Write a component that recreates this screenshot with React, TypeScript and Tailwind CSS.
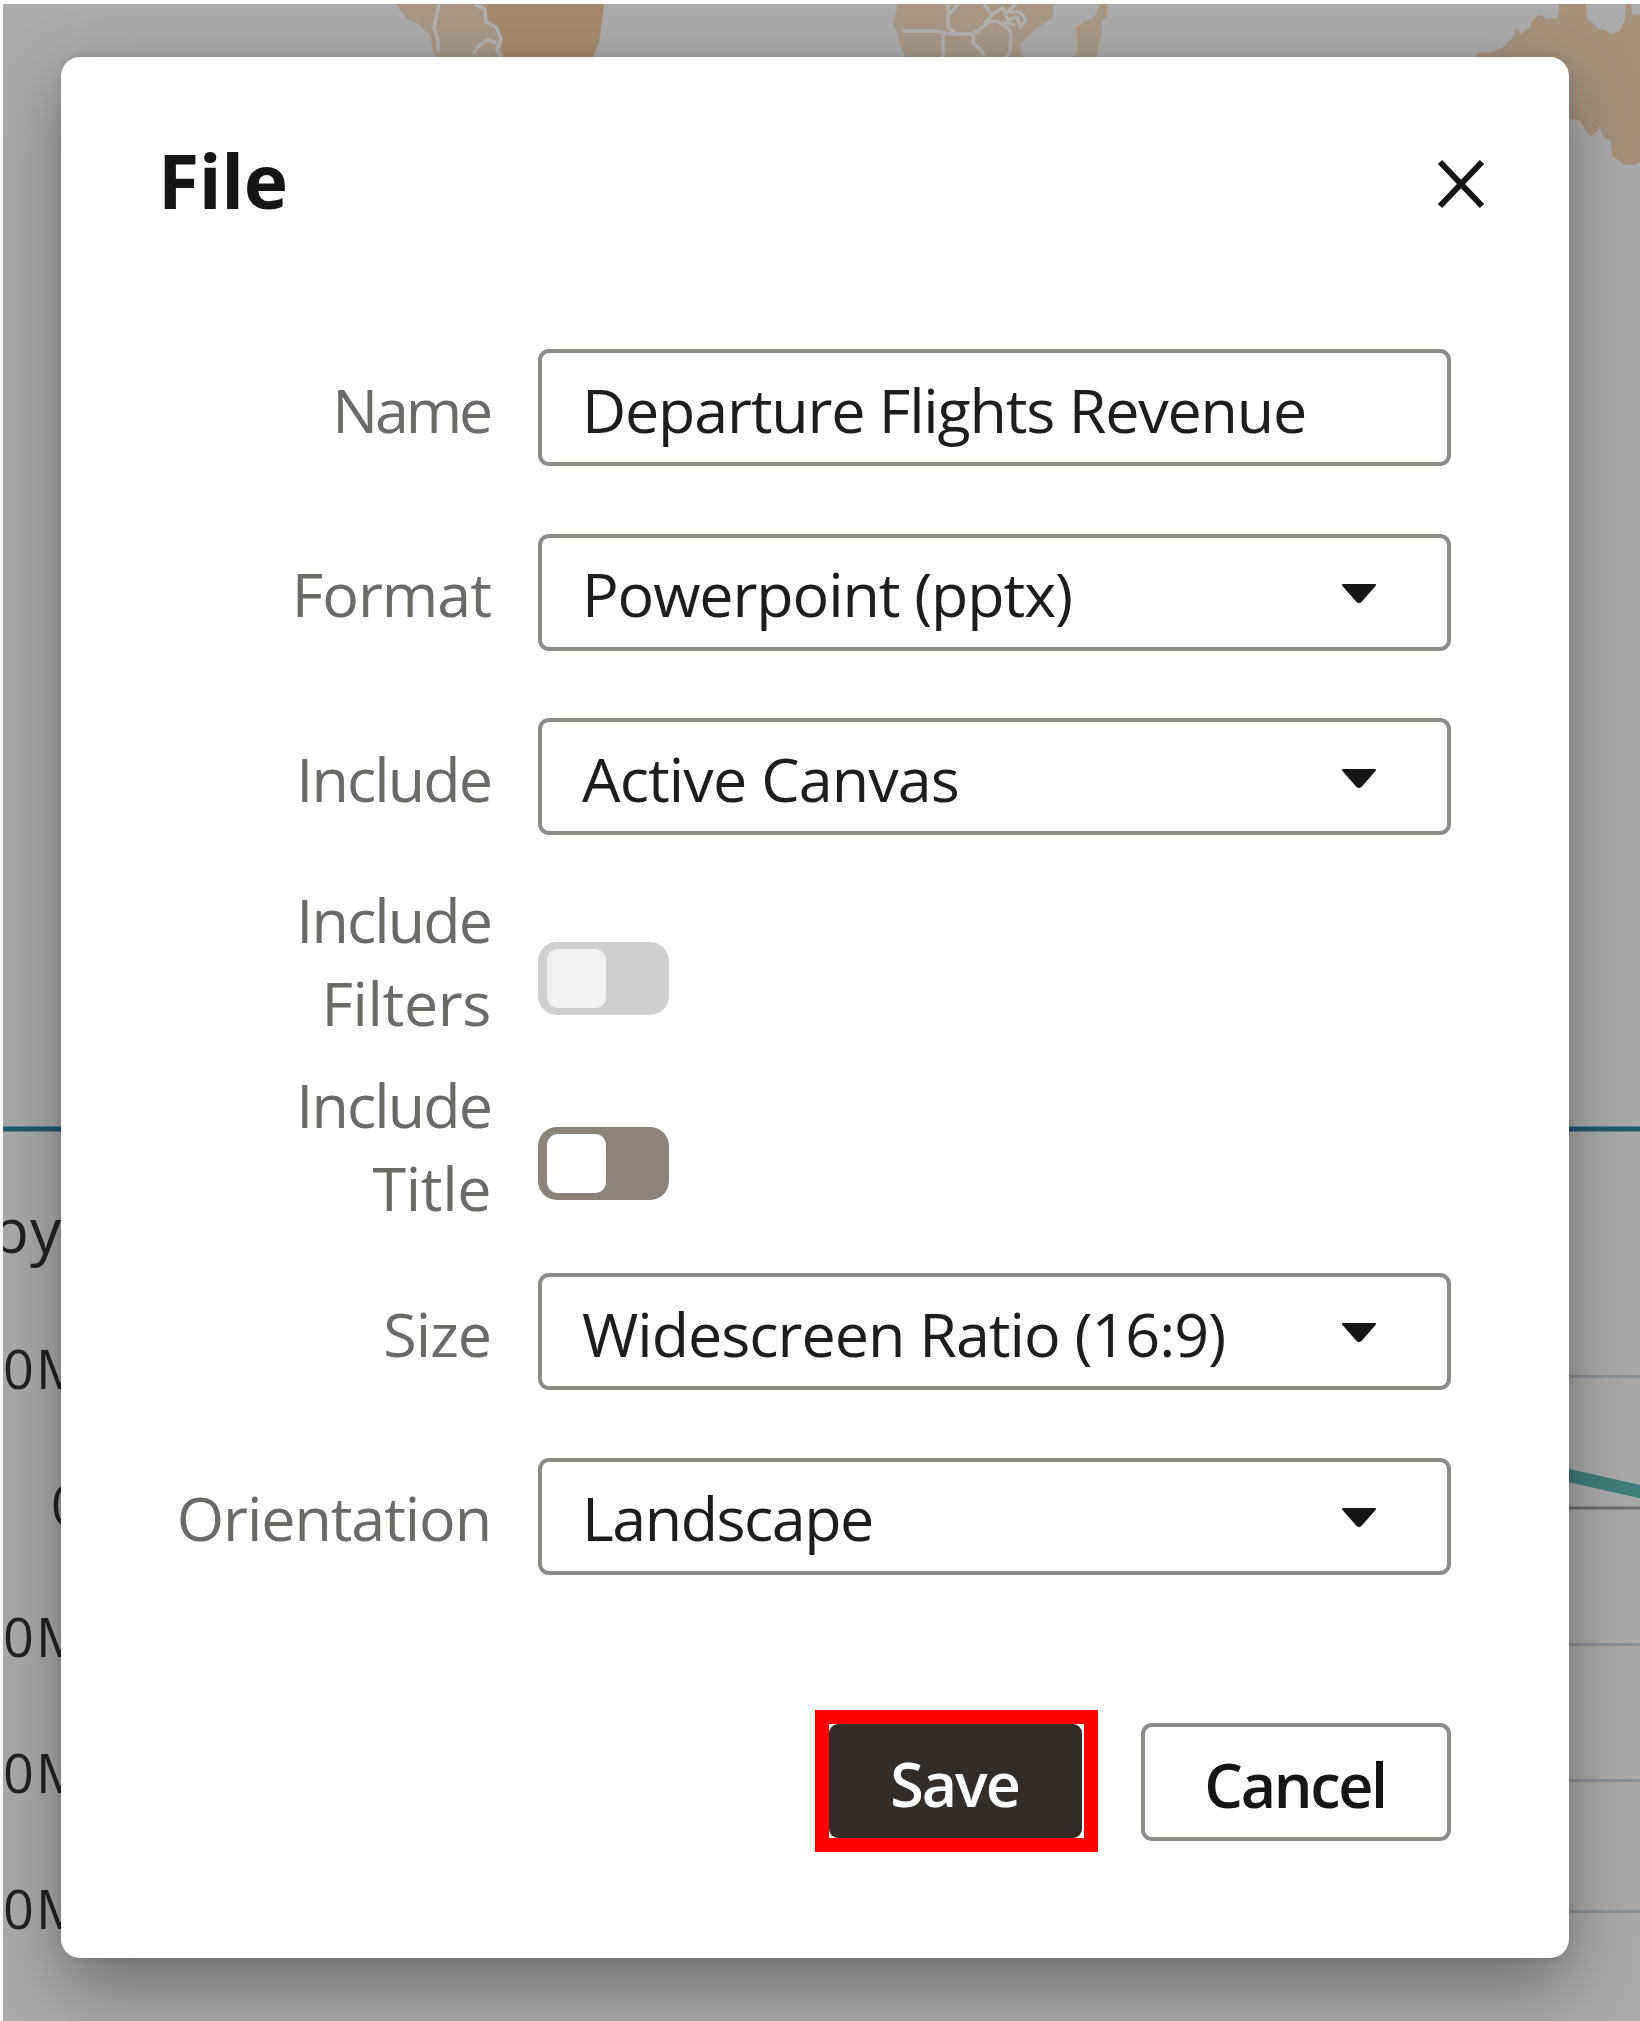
import type { ReactNode } from "react";

function MapAndChart() {
  return (
    <svg
      className="col-start-1 row-start-1 mt-1 ml-[3px]"
      width="1637"
      height="2017"
      viewBox="3 4 1637 2017"
      fontFamily='"Open Sans", sans-serif'
      fill="#242220"
    >
      <rect x="3" y="4" width="1637" height="2017" fill="#ababab" />

      {/* South America */}
      <path fill="#a99784" d="M396 4H490L500 24L502 38L508 60H440L433 52L430 35L418 24L407 19Z" />
      <path fill="#a58a6d" d="M486 4H604L602 22L599 42L592 60H504L502 44L496 26L487 18Z" />
      <path
        fill="none"
        stroke="#b0b1af"
        strokeWidth="3.5"
        strokeLinejoin="round"
        d="M439 4L436 18L434 28L438 40L438 52M475 5L485 9L486 22L496 27L501 39L497 50L501 58M497 43L488 40L478 46L474 54"
      />

      {/* Africa */}
      <path fill="#a99784" d="M898 4H1053V16L1044 24L1035 28L1028 37L1020 44L1021 54L1027 60H907L900 45L896 29L893 24Z" />
      <path
        fill="none"
        stroke="#b0b1af"
        strokeWidth="3.5"
        strokeLinejoin="round"
        d="M902 31H936L950 34H973L980 29L990 21L998 22L1008 28L1011 34L1010 52L1006 59M948 4V27L954 33M958 4L950 14M973 34V43L982 51L985 59M943 34V60M984 4L992 15L984 24M992 14L1003 8L1008 20L1017 17L1020 27L1026 20L1020 12H1008L1016 4M1003 22L1015 25"
      />
      <path fill="#a99784" d="M1101 4H1107V17L1102 21V34L1099 42L1096 60H1072L1078 50L1076 27L1083 22L1094 18L1097 10Z" />

      {/* Australia */}
      <path
        fill="#a7917b"
        d="M1476 60L1477 53L1493 52L1505 46L1514 36L1516 28L1521 34L1529 28L1532 21L1538 15L1543 16L1546 19L1558 18L1559 4H1586L1587 19L1592 23L1599 29L1605 30L1612 34L1620 31L1625 19L1626 4H1631L1632 15L1640 14V162L1635 165H1625L1612 156L1611 142L1601 134L1600 126L1595 134L1590 136L1583 126L1580 121L1568 118L1560 70Z"
      />

      {/* Chart: panel edge, gridlines and series */}
      <rect x="3" y="1126.500" width="1637" height="5" fill="#1f5a73" />
      <path stroke="#8d9094" strokeWidth="3" d="M1400 1376.5H1640M1400 1644.5H1640M1400 1780.5H1640M1400 1911.5H1640" />
      <path stroke="#6c6c6c" strokeWidth="3" d="M1400 1508H1640" />
      <path stroke="#3f7e79" strokeWidth="13" d="M1500 1460L1642 1492" />

      <text x="-9" y="1253" fontSize="62" letterSpacing="1">by</text>
      <g fontSize="54" letterSpacing="2">
        <text x="3" y="1389">0M</text>
        <text x="51" y="1525">0</text>
        <text x="3" y="1657">0M</text>
        <text x="3" y="1793">0M</text>
        <text x="3" y="1929">0M</text>
      </g>
    </svg>
  );
}

function Row({ label, children }: { label: ReactNode; children: ReactNode }) {
  return (
    <div className="flex h-[184.8px] items-center">
      <div className="flex w-[331px] shrink-0 flex-col items-end text-[#6b6a67]">{label}</div>
      <div className="ml-[47px] flex-1">{children}</div>
    </div>
  );
}

function Field({ text, spacing, dropdown }: { text: string; spacing: string; dropdown?: boolean }) {
  return (
    <div className="flex h-[117px] items-center justify-between rounded-[11px] border-[4px] border-[#8b8b88] pr-[70px] pl-[40px] text-[#1f1d1b]">
      <span className={`whitespace-nowrap pt-[5px] ${spacing}`}>{text}</span>
      {dropdown && (
        <svg width="36" height="20" viewBox="0 0 36 20" className="mt-[2px] shrink-0">
          <path fill="#161513" stroke="#161513" strokeWidth="2" strokeLinejoin="round" d="M2 2H34L19.500 18.500Q18 19.500 16.500 18.500Z" />
        </svg>
      )}
    </div>
  );
}

function Toggle({ disabled }: { disabled?: boolean }) {
  return (
    <div className={`mt-[34px] flex h-[73px] w-[131px] items-center rounded-[19px] pl-[9px] ${disabled ? "bg-[#cfcfcf]" : "bg-[#8a847d]"}`}>
      <div className={`size-[59px] rounded-[11px] ${disabled ? "bg-[#f2f1ef]" : "bg-white"}`} />
    </div>
  );
}

export default function App() {
  return (
    <div className="grid h-[2021px] w-[1640px] overflow-hidden bg-white font-['Open_Sans',sans-serif] text-[61px] leading-[82.6px]">
      <MapAndChart />
      <div className="relative col-start-1 row-start-1 mt-[57px] ml-[61px] h-[1901px] w-[1508px] rounded-[19px] bg-white shadow-[0_28px_70px_rgba(0,0,0,0.36),0_0_8px_rgba(0,0,0,0.12)]">
        <div className="flex h-[258px] items-start justify-between pt-[76px] pr-[84px] pl-[97px]">
          <h1 className="-mt-[3px] text-[75px] leading-[100px] font-bold tracking-[-0.4px] text-[#161513]">File</h1>
          <svg width="48" height="50" viewBox="0 0 48 50" className="mt-[26px]">
            <path fill="none" stroke="#161513" strokeWidth="6" d="M3 3L45 47M45 3L3 47" />
          </svg>
        </div>
        <div className="pr-[118px] pl-[99px]">
          <Row label={<span className="pt-[5px] pr-[1px] tracking-[-3.2px]">Name</span>}>
            <Field text="Departure Flights Revenue" spacing="tracking-[-1.2px]" />
          </Row>
          <Row label={<span className="pt-[5px] tracking-[-1px]">Format</span>}>
            <Field text="Powerpoint (pptx)" spacing="tracking-[-1.1px]" dropdown />
          </Row>
          <Row label={<span className="pt-[5px] tracking-[-1.9px]">Include</span>}>
            <Field text="Active Canvas" spacing="tracking-[-0.9px]" dropdown />
          </Row>
          <Row
            label={
              <>
                <span className="tracking-[-1.9px]">Include</span>
                <span className="tracking-[-0.4px]">Filters</span>
              </>
            }
          >
            <Toggle disabled />
          </Row>
          <Row
            label={
              <>
                <span className="tracking-[-1.9px]">Include</span>
                <span className="tracking-[-0.4px]">Title</span>
              </>
            }
          >
            <Toggle />
          </Row>
          <Row label={<span className="pt-[5px] tracking-[-1px]">Size</span>}>
            <Field text="Widescreen Ratio (16:9)" spacing="tracking-[-1px]" dropdown />
          </Row>
          <Row label={<span className="pt-[5px] tracking-[-1.1px]">Orientation</span>}>
            <Field text="Landscape" spacing="tracking-[-1.5px]" dropdown />
          </Row>
        </div>
        <div className="mt-[101px] flex items-center justify-end gap-[43px] pr-[118px] font-semibold">
          <div className="h-[142px] w-[283px] border-[14px] border-[#ff0000] bg-white">
            <button className="block h-[114px] w-[253px] rounded-[9px] bg-[#332d2a] pt-[8px] pr-[2px] tracking-[-2px] text-white">Save</button>
          </div>
          <button className="mt-[3px] h-[118px] w-[310px] rounded-[11px] border-[4px] border-[#8b8b88] pt-[6px] pr-[2px] tracking-[-2.3px] text-[#161513]">Cancel</button>
        </div>
      </div>
    </div>
  );
}
